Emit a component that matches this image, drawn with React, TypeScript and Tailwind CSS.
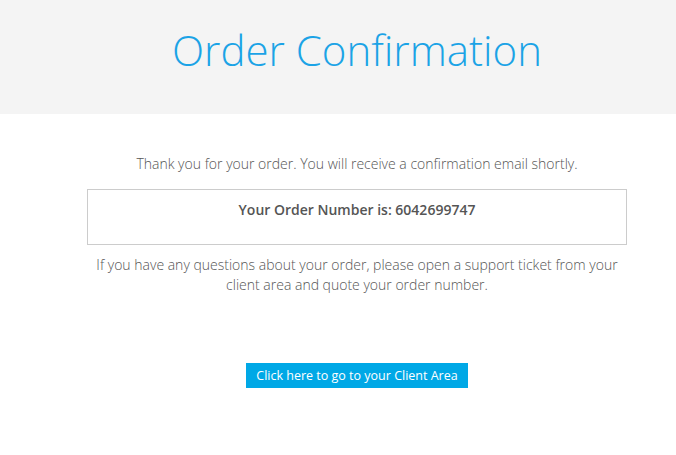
export default function App() {
  return (
    <div className="min-h-[455px] w-[676px] bg-white font-['Open_Sans',sans-serif] text-[#555]">
      <div className="flex h-[114px] items-start bg-[#f4f4f4]">
        <div className="ml-[72px] w-[570px] pt-[20px] text-center">
          <h1 className="text-[42px] font-light leading-[60px] text-[#1ba3e6]">
            Order Confirmation
          </h1>
        </div>
      </div>

      <div className="ml-[72px] flex w-[570px] flex-col items-center px-[15px] pt-[40px]">
        <p className="text-[14px] font-light leading-[20px]">
          Thank you for your order. You will receive a confirmation email
          shortly.
        </p>

        <div className="mt-[15px] w-[540px] border border-[#ccc] px-4 pt-[10px] pb-[24px] text-center">
          <p className="text-[14px] font-semibold leading-[20px]">
            Your Order Number is: 6042699747
          </p>
        </div>

        <p className="mt-[10px] w-[540px] text-center text-[14px] font-light leading-[20px]">
          If you have any questions about your order, please open a support
          ticket from your client area and quote your order number.
        </p>

        <a
          href="#"
          className="mt-[68px] bg-[#00a8e6] px-[10px] py-[3px] text-[12.5px] leading-[19px] text-white"
        >
          Click here to go to your Client Area
        </a>
      </div>
    </div>
  )
}
